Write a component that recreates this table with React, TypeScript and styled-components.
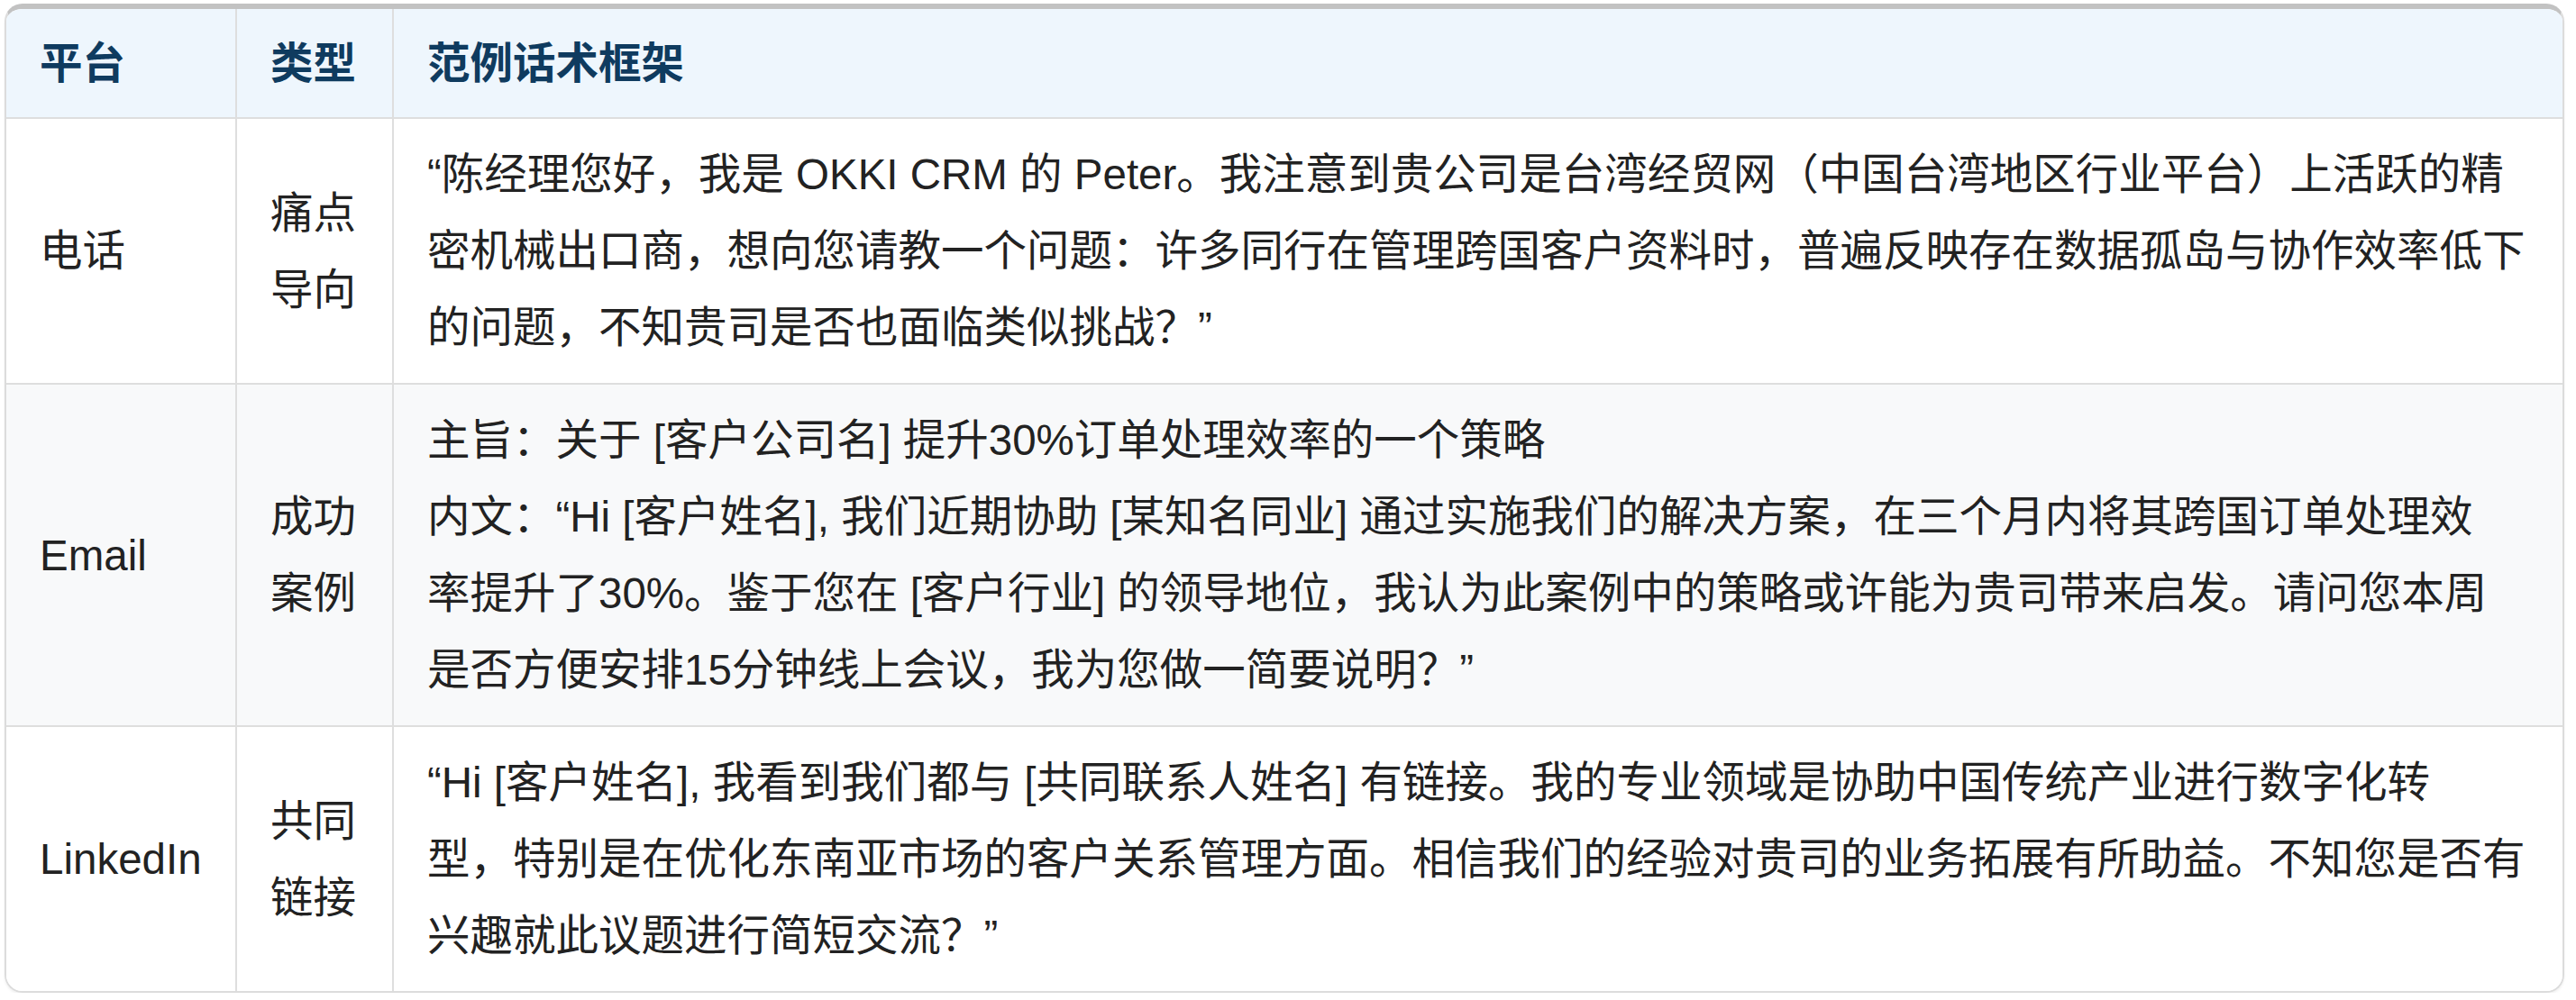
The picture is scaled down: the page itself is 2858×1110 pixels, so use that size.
import React from "react";
import styled, { createGlobalStyle } from "styled-components";

const GlobalStyle = createGlobalStyle`
  html, body {
    margin: 0;
    padding: 0;
    background: #ffffff;
  }
  body {
    font-family: "Liberation Sans", "Noto Sans CJK SC", sans-serif;
  }
`;

const Page = styled.div`
  width: 2858px;
  box-sizing: border-box;
  padding: 4px 13px 0 5px;
`;

const TableFrame = styled.div`
  border: 2px solid #dcdcdc;
  border-top: 6px solid #c2c2c2;
  border-radius: 20px;
  overflow: hidden;
  box-shadow: 0 2px 3px rgba(0, 0, 0, 0.06);
  font-size: 47.5px;
  line-height: 85px;
  color: #222222;
`;

const Row = styled.div<{ $variant?: "head" | "plain" | "shade" }>`
  display: grid;
  grid-template-columns: 254px 174px 1fr;
  background: ${(p) =>
    p.$variant === "head" ? "#eef6fd" : p.$variant === "shade" ? "#f8f9fa" : "#ffffff"};
  & + & {
    border-top: 2px solid #dedede;
  }
`;

const HeadCell = styled.div`
  padding: 17.5px 37px;
  font-weight: 700;
  color: #0f3b5f;
  white-space: nowrap;
  & + & {
    border-left: 2px solid #dedede;
  }
`;

const LabelCell = styled.div`
  display: flex;
  align-items: center;
  padding: 19px 37px;
  & + & {
    border-left: 2px solid #dedede;
  }
`;

const ScriptCell = styled.div`
  padding: 19px 37px;
  border-left: 2px solid #dedede;
  white-space: nowrap;
`;

const Line = styled.span`
  display: block;
`;

type Entry = {
  platform: string;
  type: string;
  lines: string[];
};

const entries: Entry[] = [
  {
    platform: "电话",
    type: "痛点导向",
    lines: [
      "“陈经理您好，我是 OKKI CRM 的 Peter。我注意到贵公司是台湾经贸网（中国台湾地区行业平台）上活跃的精",
      "密机械出口商，想向您请教一个问题：许多同行在管理跨国客户资料时，普遍反映存在数据孤岛与协作效率低下",
      "的问题，不知贵司是否也面临类似挑战？”",
    ],
  },
  {
    platform: "Email",
    type: "成功案例",
    lines: [
      "主旨：关于 [客户公司名] 提升30%订单处理效率的一个策略",
      "内文：“Hi [客户姓名], 我们近期协助 [某知名同业] 通过实施我们的解决方案，在三个月内将其跨国订单处理效",
      "率提升了30%。鉴于您在 [客户行业] 的领导地位，我认为此案例中的策略或许能为贵司带来启发。请问您本周",
      "是否方便安排15分钟线上会议，我为您做一简要说明？”",
    ],
  },
  {
    platform: "LinkedIn",
    type: "共同链接",
    lines: [
      "“Hi [客户姓名], 我看到我们都与 [共同联系人姓名] 有链接。我的专业领域是协助中国传统产业进行数字化转",
      "型，特别是在优化东南亚市场的客户关系管理方面。相信我们的经验对贵司的业务拓展有所助益。不知您是否有",
      "兴趣就此议题进行简短交流？”",
    ],
  },
];

export default function App() {
  return (
    <>
      <GlobalStyle />
      <Page>
        <TableFrame>
          <Row $variant="head">
            <HeadCell>平台</HeadCell>
            <HeadCell>类型</HeadCell>
            <HeadCell>范例话术框架</HeadCell>
          </Row>
          {entries.map((e, i) => (
            <Row key={e.platform} $variant={i % 2 === 1 ? "shade" : "plain"}>
              <LabelCell>{e.platform}</LabelCell>
              <LabelCell>{e.type}</LabelCell>
              <ScriptCell>
                {e.lines.map((l) => (
                  <Line key={l}>{l}</Line>
                ))}
              </ScriptCell>
            </Row>
          ))}
        </TableFrame>
      </Page>
    </>
  );
}
